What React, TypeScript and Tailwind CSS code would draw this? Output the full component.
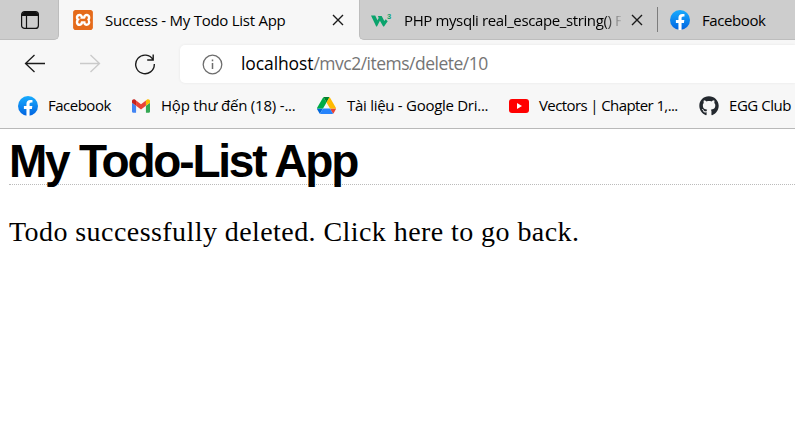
import { SiXampp } from "react-icons/si";
import { FaGithub } from "react-icons/fa";

function FacebookIcon({ id }: { id: string }) {
  return (
    <svg className="h-5 w-5 shrink-0" viewBox="0 0 24 24">
      <defs>
        <linearGradient id={id} x1="0" y1="0" x2="0" y2="1">
          <stop offset="0" stopColor="#18acfe" />
          <stop offset="1" stopColor="#0163e0" />
        </linearGradient>
      </defs>
      <circle cx="12" cy="12" r="12" fill={`url(#${id})`} />
      <path
        fill="#fff"
        d="M16.67 15.47l.54-3.47h-3.33V9.75c0-.95.47-1.87 1.96-1.87h1.51V4.92s-1.37-.23-2.69-.23c-2.74 0-4.53 1.66-4.53 4.67V12H7.08v3.47h3.05v8.39a12.1 12.1 0 0 0 3.75 0v-8.39z"
      />
    </svg>
  );
}

function GmailIcon() {
  return (
    <svg className="h-[14px] w-[18px] shrink-0" viewBox="52 42 88 66">
      <path fill="#4285f4" d="M58 108h14V74L52 59v43c0 3.320 2.690 6 6 6" />
      <path fill="#34a853" d="M120 108h14c3.320 0 6-2.690 6-6V59l-20 15" />
      <path fill="#fbbc04" d="M120 48v26l20-15v-8c0-7.420-8.470-11.650-14.400-7.200" />
      <path fill="#ea4335" d="M72 74V48l24 18 24-18v26L96 92" />
      <path fill="#c5221f" d="M52 51v8l20 15V48l-5.600-4.200c-5.940-4.450-14.400-.22-14.400 7.200" />
    </svg>
  );
}

function DriveIcon() {
  return (
    <svg className="h-[17px] w-[19px] shrink-0" viewBox="0 0 87.3 78">
      <path fill="#0066da" d="m6.600 66.850 3.850 6.650c.8 1.400 1.950 2.500 3.300 3.300l13.750-23.800h-27.500c0 1.550.4 3.100 1.200 4.500z" />
      <path fill="#00ac47" d="m43.650 25-13.750-23.800c-1.350.8-2.500 1.900-3.300 3.300l-25.400 44a9.060 9.060 0 0 0-1.200 4.500h27.500z" />
      <path fill="#ea4335" d="m73.550 76.800c1.350-.8 2.500-1.900 3.300-3.300l1.600-2.750 7.650-13.250c.8-1.400 1.200-2.950 1.200-4.500h-27.502l5.852 11.500z" />
      <path fill="#00832d" d="m43.650 25 13.750-23.800c-1.350-.8-2.900-1.200-4.500-1.200h-18.500c-1.600 0-3.150.45-4.500 1.200z" />
      <path fill="#2684fc" d="m59.800 53h-32.300l-13.750 23.800c1.350.8 2.900 1.200 4.500 1.200h50.800c1.600 0 3.150-.45 4.500-1.200z" />
      <path fill="#ffba00" d="m73.400 26.500-12.700-22c-.8-1.400-1.950-2.500-3.300-3.300l-13.750 23.800 16.150 28h27.450c0-1.550-.4-3.100-1.200-4.500z" />
    </svg>
  );
}

function YoutubeIcon() {
  return (
    <svg className="h-[14px] w-5 shrink-0" viewBox="0 0 20 14">
      <rect width="20" height="14" rx="3" fill="#f00" />
      <path d="M8 4l5 3-5 3z" fill="#fff" />
    </svg>
  );
}

function W3Icon() {
  return (
    <svg className="h-5 w-[21px] shrink-0" viewBox="0 0 21 20">
      <path d="M0 5.500h4.200l2.300 4.800 1.200-2.300-.8-2h3.800l2.600 5 1.400-1.800 2 2L13 16.600h-.8L8.900 10.700 6 16.600h-.8z" fill="#0aa36c" />
      <text x="16" y="9.200" fontSize="7.500" fontWeight="700" fill="#0aa36c" fontFamily="Liberation Sans, sans-serif">3</text>
    </svg>
  );
}

function CloseIcon() {
  return (
    <svg className="h-3 w-3 shrink-0" viewBox="0 0 12 12" fill="none" stroke="#1a1a1a" strokeWidth="1.4">
      <path d="M1 1l10 10M11 1L1 11" />
    </svg>
  );
}

function TabStrip() {
  return (
    <div className="flex h-10 bg-[#f7f7f7] text-[15px] leading-5">
      <div className="flex w-[59px] items-center rounded-br-[5px] border-b border-r border-[#bdbdbd] bg-[#cdcdcd] pl-[21px]">
        <svg className="h-[18px] w-[18px]" viewBox="0 0 18 18" fill="none" stroke="#111">
          <rect x=".6" y=".6" width="16.800" height="16.800" rx="3" strokeWidth="1.200" />
          <path d="M1 3.500Q1 1 3.500 1h11Q17 1 17 3.500V5H1z" fill="#111" stroke="none" />
          <path d="M5.500 5v12" strokeWidth="1.200" />
        </svg>
      </div>
      <div className="flex w-[300px] items-center pl-[14px]">
        <div className="h-5 w-5 shrink-0 overflow-hidden rounded-[2px] bg-white">
          <SiXampp className="h-5 w-5 text-[#e56b1b]" />
        </div>
        <span className="ml-3 w-[227px] pb-px whitespace-nowrap tracking-[-0.26px]">Success - My Todo List App</span>
        <CloseIcon />
      </div>
      <div className="flex min-w-0 flex-1 items-center rounded-bl-[5px] border-b border-l border-[#bdbdbd] bg-[#cdcdcd] pl-[11px]">
        <W3Icon />
        <span className="ml-3 w-[217px] shrink-0 whitespace-nowrap tracking-[-0.38px] [mask-image:linear-gradient(to_right,black_200px,transparent_219px)]">
          PHP mysqli real_escape_string() F
        </span>
        <span className="ml-[10px] flex"><CloseIcon /></span>
        <div className="ml-[14px] h-[25px] w-px shrink-0 bg-[#7d7d7d]" />
        <span className="ml-3 flex"><FacebookIcon id="fb-tab" /></span>
        <span className="ml-3 whitespace-nowrap tracking-[-0.4px]">Facebook</span>
      </div>
    </div>
  );
}

function Toolbar() {
  return (
    <div className="flex h-12 items-center bg-[#f7f7f7] pl-6">
      <svg className="h-5 w-[21px] shrink-0" viewBox="0 0 21 20" fill="none" stroke="#1b1b1b" strokeWidth="1.300">
        <path d="M21 9.500H1.500M10.500 1L1.500 9.500l9 8.500" />
      </svg>
      <svg className="ml-[35px] h-5 w-[21px] shrink-0" viewBox="0 0 21 20" fill="none" stroke="#cacaca" strokeWidth="1.300">
        <path d="M0 9.500h19.500M10.500 1l9 8.500-9 8.500" />
      </svg>
      <svg className="ml-[33px] h-[22px] w-[22px] shrink-0" viewBox="0 0 22 22" fill="none" stroke="#1b1b1b" strokeWidth="1.400">
        <path d="M19.200 7A9.300 9.300 0 1 0 20.300 11M19.200 1.500V7h-6" />
      </svg>
      <div className="ml-6 flex h-[38px] flex-1 items-center rounded-l-[5px] bg-white pl-[22px] shadow-[0_0_3px_rgba(0,0,0,0.07)]">
        <svg className="h-[21px] w-[21px] shrink-0" viewBox="0 0 21 21" fill="none" stroke="#6d6d6d" strokeWidth="1.300">
          <circle cx="10.500" cy="10.500" r="9.300" />
          <path d="M10.500 9v6M10.500 5.500v1.700" strokeWidth="1.500" />
        </svg>
        <span className="ml-[18px] pb-[2px] whitespace-nowrap text-[17.5px] leading-6 tracking-[-0.5px] text-[#757575]">
          <span className="tracking-[-0.1px] text-black">localhost</span>/mvc2/items/delete/10
        </span>
      </div>
    </div>
  );
}

function Bookmarks() {
  return (
    <div className="flex h-[41px] items-center overflow-hidden border-b border-[#b9b9b9] bg-[#f7f7f7] pb-[5px] pl-[18px] text-[15px] leading-5 whitespace-nowrap">
      <div className="flex w-[114px] shrink-0 items-center gap-[10px]">
        <FacebookIcon id="fb-mark" />
        <span className="pb-[2px] tracking-[-0.5px]">Facebook</span>
      </div>
      <div className="flex w-[185px] shrink-0 items-center gap-[11px]">
        <GmailIcon />
        <span className="pb-[2px] tracking-[-0.2px]">Hộp thư đến (18) -...</span>
      </div>
      <div className="flex w-[192px] shrink-0 items-center gap-[11px]">
        <DriveIcon />
        <span className="pb-[2px] tracking-[-0.28px]">Tài liệu - Google Dri...</span>
      </div>
      <div className="flex w-[190px] shrink-0 items-center gap-[10px]">
        <YoutubeIcon />
        <span className="pb-[2px] tracking-[-0.6px]">Vectors | Chapter 1,...</span>
      </div>
      <div className="flex shrink-0 items-center gap-[10px]">
        <FaGithub className="h-5 w-5 text-[#24292f]" />
        <span className="pb-[2px] tracking-[-0.45px]">EGG Club</span>
      </div>
    </div>
  );
}

export default function App() {
  return (
    <div className="h-[432px] w-[795px] overflow-hidden bg-white font-['Open_Sans','Noto_Sans',sans-serif] text-black">
      <TabStrip />
      <Toolbar />
      <Bookmarks />
      <main className="pl-[9px]">
        <h1 className="h-14 border-b border-dotted border-[#bbb] pt-[5px] font-['Liberation_Sans',Arial,sans-serif] text-[46px] leading-[54px] font-bold tracking-[-2.2px] whitespace-nowrap">
          My Todo-List App
        </h1>
        <p className="mt-[29px] font-[Georgia,'Liberation_Serif',serif] text-[28px] leading-9 tracking-[0.43px] whitespace-nowrap">
          Todo successfully deleted. Click here to go back.
        </p>
      </main>
    </div>
  );
}
